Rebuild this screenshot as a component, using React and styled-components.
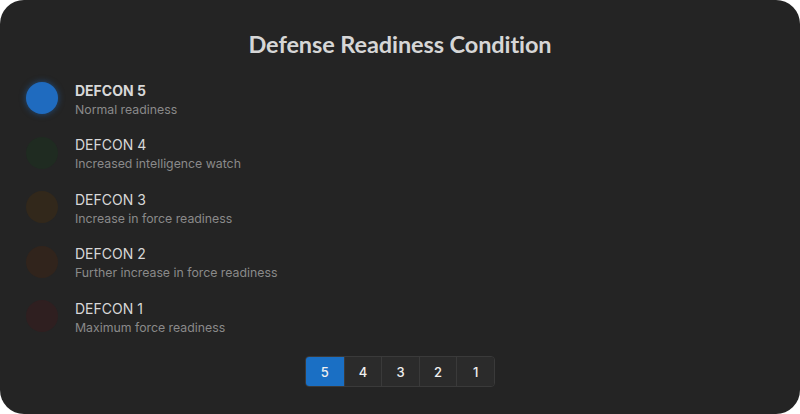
import React, { useState } from 'react';
import styled, { createGlobalStyle } from 'styled-components';

const GlobalStyle = createGlobalStyle`
  html, body {
    margin: 0;
    padding: 0;
    background: #ffffff;
  }
  * { box-sizing: border-box; }
`;

const levels = [
  { id: 5, label: 'DEFCON 5', desc: 'Normal readiness', color: '#1f6bbf', dim: '#1f6bbf' },
  { id: 4, label: 'DEFCON 4', desc: 'Increased intelligence watch', color: '#22c55e', dim: '#1f2b21' },
  { id: 3, label: 'DEFCON 3', desc: 'Increase in force readiness', color: '#eab308', dim: '#32281b' },
  { id: 2, label: 'DEFCON 2', desc: 'Further increase in force readiness', color: '#f97316', dim: '#31241c' },
  { id: 1, label: 'DEFCON 1', desc: 'Maximum force readiness', color: '#ef4444', dim: '#2f1f20' },
];

export default function App() {
  const [active, setActive] = useState(5);

  return (
    <>
      <GlobalStyle />
      <Card>
        <Title>Defense Readiness Condition</Title>
        <List>
          {levels.map(level => (
            <Row key={level.id}>
              <Dot
                $color={level.id === active ? level.color : level.dim}
                $active={level.id === active}
              />
              <Info>
                <Label $active={level.id === active}>{level.label}</Label>
                <Desc>{level.desc}</Desc>
              </Info>
            </Row>
          ))}
        </List>
        <Group>
          {levels.map(level => (
            <Btn
              key={level.id}
              $active={level.id === active}
              onClick={() => setActive(level.id)}
            >
              {level.id}
            </Btn>
          ))}
        </Group>
      </Card>
    </>
  );
}

const Card = styled.div`
  width: 800px;
  height: 414px;
  background: #242424;
  border-radius: 24px;
  padding: 30px 26px 0 26px;
  display: flex;
  flex-direction: column;
  overflow: hidden;
`;

const Title = styled.h1`
  margin: 0;
  text-align: center;
  font-family: Lato, "Noto Sans", sans-serif;
  font-weight: 700;
  font-size: 23.5px;
  line-height: 28px;
  color: #d6d6d6;
  letter-spacing: -0.1px;
`;

const List = styled.div`
  margin-top: 21px;
  display: flex;
  flex-direction: column;
  gap: 16.5px;
`;

const Row = styled.div`
  display: flex;
  align-items: center;
  gap: 17px;
  height: 38px;
`;

const Dot = styled.div`
  width: 32px;
  height: 32px;
  border-radius: 50%;
  flex-shrink: 0;
  background: ${p => p.$color};
  box-shadow: ${p => (p.$active ? `0 0 6px ${p.$color}99` : 'none')};
`;

const Info = styled.div`
  display: flex;
  flex-direction: column;
  padding-top: 4px;
  font-family: Inter, "Liberation Sans", sans-serif;
`;

const Label = styled.div`
  font-size: 14px;
  line-height: 20px;
  font-weight: ${p => (p.$active ? 700 : 400)};
  color: #d8d8d8;
`;

const Desc = styled.div`
  font-size: 12.3px;
  line-height: 18.5px;
  color: #8a8a8a;
`;

const Group = styled.div`
  margin: 21px auto 0 auto;
  display: flex;
  border: 1px solid #3a3a3a;
  border-radius: 4px;
  overflow: hidden;
`;

const Btn = styled.button`
  width: 37.6px;
  height: 29px;
  border: none;
  border-left: 1px solid #3a3a3a;
  background: ${p => (p.$active ? '#1a6fc4' : '#2b2b2b')};
  color: #f0f0f0;
  font-family: Inter, "Liberation Sans", sans-serif;
  font-size: 13px;
  font-weight: 500;
  padding: 0;
  cursor: pointer;

  &:first-child {
    border-left: none;
  }
`;
